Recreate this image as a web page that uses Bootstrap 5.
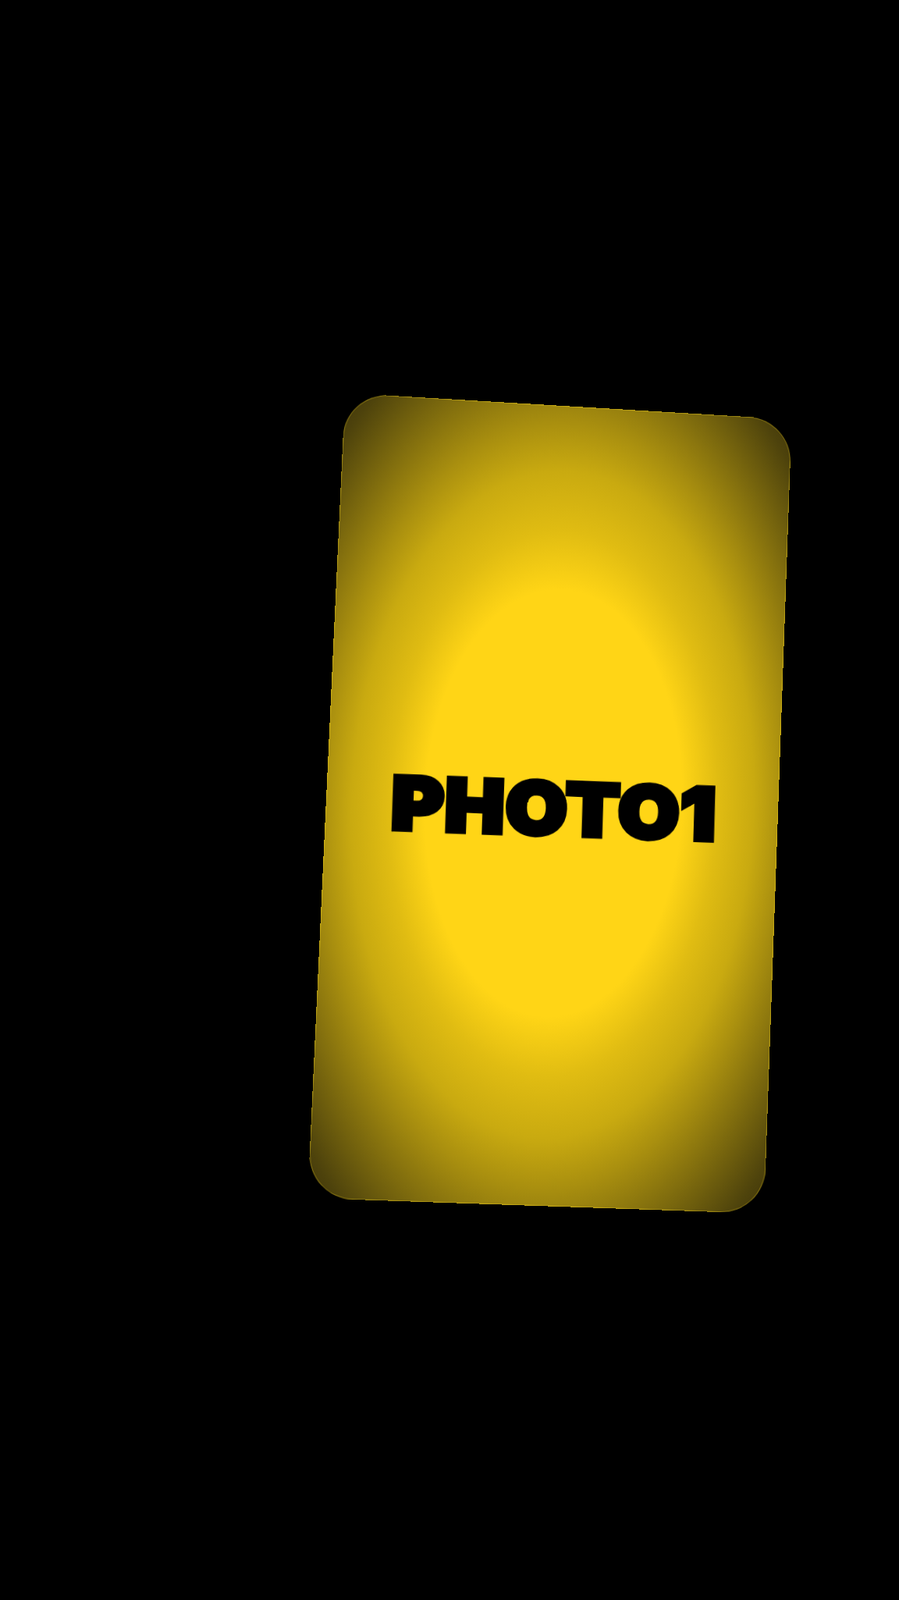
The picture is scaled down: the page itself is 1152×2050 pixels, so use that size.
<!DOCTYPE html>
<html lang="en">
<head>
<meta charset="utf-8">
<title>Photo</title>
<link href="https://cdn.jsdelivr.net/npm/bootstrap@5.3.0/dist/css/bootstrap.min.css" rel="stylesheet">
<style>
html, body { background: #000; }
.stage { width: 1152px; height: 2050px; overflow: hidden; }
.photo-tile {
  width: 576px; height: 1024px; flex: none;
  border-radius: 56px;
  border: 1.5px solid rgba(255, 220, 30, .35);
  background: radial-gradient(ellipse 420px 700px at center, #ffd516 0%, #ffd516 39%, #e0bc12 50%, #c9aa10 61%, #a98f0f 70%, #4e430c 94%, #40350a 100%);
  transform-origin: 0 0;
  transform: matrix3d(1.01887,.07224,0,2.4578e-5, -.05479,.97693,0,-1.9859e-5, 0,0,1,0, 442.2,503.4,0,1);
}
.photo-word {
  font-family: Inter, Roboto, "Liberation Sans", sans-serif;
  font-weight: 900;
  font-size: 93px;
  line-height: 1;
  letter-spacing: 1px;
  padding-top: 17px;
  padding-left: 2px;
  color: #000;
  -webkit-text-stroke: 6px #000;
  text-shadow: 0 0 2px #fff53a, 0 0 2px #fff53a, 0 0 3px #fff53a, 0 0 1px #fff53a;
  transform: rotate(-.6deg) scaleX(1.09);
}
</style>
</head>
<body class="m-0">
<main class="stage d-flex align-items-start justify-content-start bg-black">
  <div class="photo-tile d-flex align-items-center justify-content-center">
    <span class="photo-word d-inline-block">PHOTO1</span>
  </div>
</main>
<script src="https://cdn.jsdelivr.net/npm/bootstrap@5.3.0/dist/js/bootstrap.bundle.min.js"></script>
</body>
</html>
